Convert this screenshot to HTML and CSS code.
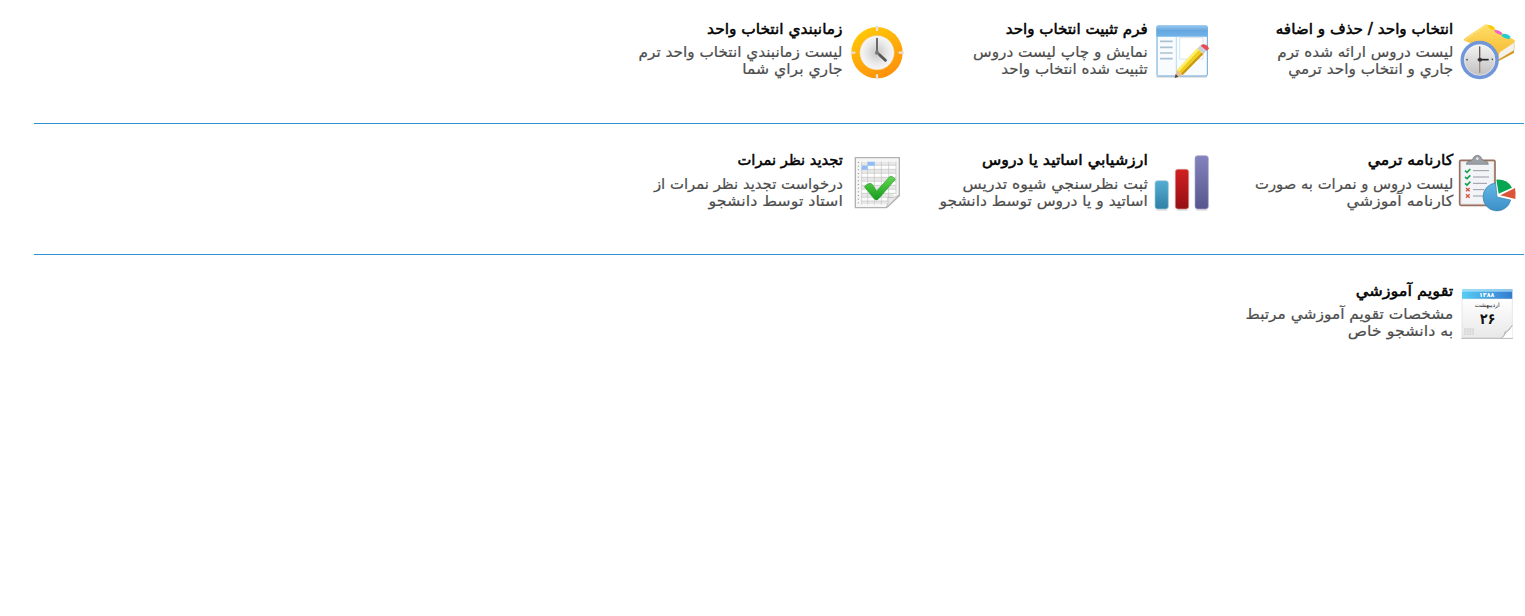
FILE: index.html
```html
<!DOCTYPE html>
<html lang="fa" dir="rtl">
<head>
<meta charset="utf-8">
<title>آموزش</title>
<link rel="stylesheet" href="styles.css">
</head>
<body>
<main class="menu">
  <section class="row">
    <a class="item">
      <svg class="icon" viewBox="21 21 180 180">
        <defs>
          <linearGradient id="folder" x1="0" y1="0" x2="0" y2="1"><stop offset="0" stop-color="#ffdf68"/><stop offset="1" stop-color="#f5b52b"/></linearGradient>
          <linearGradient id="dial" x1="0" y1="0" x2="0" y2="1"><stop offset="0" stop-color="#f8f8f8"/><stop offset="1" stop-color="#bcbcbc"/></linearGradient>
        </defs>
        <path d="M145 112l45-33q6 14 2 28l-45 27z" fill="#f3f1ec" stroke="#d2c3a4" stroke-width="2"/>
        <path d="M142 136l50-30v8l-50 26z" fill="#d99a25"/>
        <path d="M40 76q4-7 10-10l54-37q5-3 9 0l79 45q6 5-1 10l-42 28-7 24-30-30z" fill="url(#folder)"/>
        <path d="M113 31q10-4 22 8l-4 7-11-5z" fill="#f8cc08"/><path d="M132 46q12-3 25 8l-5 6-15-7z" fill="#ef62c8"/><path d="M154 59q15-7 28 6l-5 8q-12-1-21-9z" fill="#25cbcf"/>
        <path d="M42 78l66-48" stroke="#ffeaa0" stroke-width="2" fill="none"/>
        <circle cx="89" cy="135" r="54" fill="url(#dial)"/>
        <circle cx="89" cy="135" r="52" fill="none" stroke="#7196da" stroke-width="11"/>
        <circle cx="89" cy="135" r="46" fill="none" stroke="#fff" stroke-opacity=".7" stroke-width="2"/>
        <path d="M89 95v78" stroke="#a3887c" stroke-width="4"/><path d="M89 94v40" stroke="#555" stroke-width="3"/><path d="M83 134h33" stroke="#222" stroke-width="5"/>
        <circle cx="90" cy="134" r="6" fill="#333"/><circle cx="51" cy="134" r="2.5" fill="#444"/><circle cx="127" cy="133" r="2.5" fill="#444"/>
      </svg>
      <div class="text"><h2 style="--fit:1.013">انتخاب واحد / حذف و اضافه</h2><p style="--fit:1.014">ليست دروس ارائه شده ترم</p><p style="--fit:1.02">جاري و انتخاب واحد ترمي</p></div>
    </a>
    <a class="item">
      <svg class="icon" viewBox="21 21 180 180">
        <defs><linearGradient id="bar" x1="0" y1="0" x2="0" y2="1"><stop offset="0" stop-color="#9ac8ef"/><stop offset=".45" stop-color="#65a6df"/><stop offset="1" stop-color="#72b4e9"/></linearGradient></defs>
        <path d="M33 186h153" stroke="#ddd" stroke-width="4"/>
        <rect x="36" y="33" width="151" height="150" rx="4" fill="#f9fcfe" stroke="#68a4d5" stroke-width="3"/>
        <path d="M34 65V37q0-6 6-6h142q6 0 6 6v28z" fill="url(#bar)"/>
        <path d="M94 66v115" stroke="#9bc7e9" stroke-width="2"/>
        <path d="M104 68h70v64h-70z" fill="#fff" stroke="#cbd7e2" stroke-width="2"/>
        <path d="M45 79h38M45 97h38M45 114h38M45 131h38" stroke="#a9c2d1" stroke-width="5"/>
        <path d="M96 165l61-65 18 17-62 63z" fill="#f0cd20"/><path d="M96 165l61-65 5 5-61 65z" fill="#fff06b"/><path d="M108 176l62-63 5 4-62 63z" fill="#c79612"/>
        <path d="M96 165l-7 24 24-9z" fill="#e9bd91"/><path d="M92 177l-3 12 11-4z" fill="#444"/>
        <path d="M157 100l10-9 18 15-10 11z" fill="#cbd0d8"/><path d="M167 92q6-7 15-3 9 3 10 12l-7 6z" fill="#e34d55"/>
      </svg>
      <div class="text"><h2 style="--fit:1.004">فرم تثبيت انتخاب واحد</h2><p style="--fit:1.017">نمايش و چاپ ليست دروس</p><p style="--fit:1.01">تثبيت شده انتخاب واحد</p></div>
    </a>
    <a class="item">
      <svg class="icon" viewBox="15 21 180 180">
        <defs><linearGradient id="ring" x1="0" y1="0" x2=".5" y2="1"><stop offset="0" stop-color="#ffd006"/><stop offset="1" stop-color="#ff930b"/></linearGradient>
        <radialGradient id="face"><stop offset="0" stop-color="#c6c6c6"/><stop offset=".6" stop-color="#e8e8e8"/><stop offset="1" stop-color="#f8f8f8"/></radialGradient></defs>
        <circle cx="105" cy="113" r="77" fill="url(#ring)"/><circle cx="105" cy="113" r="52" fill="url(#face)" stroke="#f4b53d" stroke-width="2"/>
        <path d="M105 33v15M105 178v15M26 113h14M170 113h16" stroke="#e5e1dc" stroke-width="7"/>
        <path d="M105 71v41l26 24" stroke="#6a6a6a" stroke-width="6" fill="none" stroke-linecap="round"/><path d="M113 120l17 16" stroke="#555" stroke-width="8" stroke-linecap="round"/><circle cx="105" cy="113" r="6" fill="#777"/>
      </svg>
      <div class="text"><h2 style="--fit:1.026">زمانبندي انتخاب واحد</h2><p style="--fit:1.017">ليست زمانبندي انتخاب واحد ترم</p><p style="--fit:1.038">جاري براي شما</p></div>
    </a>
  </section>
  <section class="row">
    <a class="item">
      <svg class="icon" viewBox="21 24 180 180">
        <defs><linearGradient id="pie" x1="0" y1="0" x2="0" y2="1"><stop offset="0" stop-color="#65b7e5"/><stop offset="1" stop-color="#3a8fc7"/></linearGradient></defs>
        <rect x="29" y="46" width="106" height="135" rx="4" fill="#e9e9ec" stroke="#97715e" stroke-width="5"/>
        <rect x="35" y="52" width="94" height="123" fill="#f3f4f7"/>
        <path d="M49 58q0-9 11-10 7-1 9-8 4-9 13-9t13 9q2 7 10 8 10 1 10 10z" fill="#9a9fa5" stroke="#74797f" stroke-width="2"/><circle cx="82" cy="41" r="4" fill="#e8e8e8"/>
        <path d="M69 77h48M69 96h48M69 115h42M69 134h34M69 153h30" stroke="#969ba4" stroke-width="3"/>
        <path d="M45 77l6 5 10-10M45 96l6 5 10-10M45 115l6 5 10-10" stroke="#14a34c" stroke-width="5" fill="none"/>
        <path d="M48 129l11 10m0-10l-11 10M48 148l11 10m0-10l-11 10" stroke="#d8523c" stroke-width="4"/>
        <path d="M141 156l-4-42a42 42 0 1 0 45 51z" fill="url(#pie)" stroke="#377fad" stroke-width="2"/>
        <path d="M146 146l-7-42q33-2 47 24z" fill="#08a552"/><path d="M151 151l44-22q3 16 1 33z" fill="#dc5438"/>
      </svg>
      <div class="text"><h2 style="--fit:1.05">كارنامه ترمي</h2><p style="--fit:.985">ليست دروس و نمرات به صورت</p><p style="--fit:1.06">كارنامه آموزشي</p></div>
    </a>
    <a class="item">
      <svg class="icon" viewBox="21 24 180 180">
        <defs><linearGradient id="blue" x1="0" y1="0" x2="0" y2="1"><stop offset="0" stop-color="#55add3"/><stop offset="1" stop-color="#2e80a5"/></linearGradient><linearGradient id="red" x1="0" y1="0" x2="0" y2="1"><stop offset="0" stop-color="#d12020"/><stop offset="1" stop-color="#950f14"/></linearGradient><linearGradient id="violet" x1="0" y1="0" x2="0" y2="1"><stop offset="0" stop-color="#8583bd"/><stop offset="1" stop-color="#57558e"/></linearGradient></defs>
        <path d="M34 195h33M95 195h33M154 195h33" stroke="#ddd" stroke-width="5"/>
        <rect x="30" y="107" width="40" height="85" rx="8" fill="url(#blue)" stroke="#9fc9dc" stroke-width="2"/><rect x="91" y="73" width="40" height="119" rx="8" fill="url(#red)" stroke="#d49191" stroke-width="2"/><rect x="150" y="32" width="40" height="160" rx="8" fill="url(#violet)" stroke="#a7a6cb" stroke-width="2"/>
      </svg>
      <div class="text"><h2 style="--fit:1.053">ارزشيابي اساتيد يا دروس</h2><p style="--fit:1.046">ثبت نظرسنجي شيوه تدريس</p><p style="--fit:1.032">اساتيد و يا دروس توسط دانشجو</p></div>
    </a>
    <a class="item">
      <svg class="icon" viewBox="15 24 180 180">
        <defs><linearGradient id="check" x1="0" y1="0" x2="0" y2="1"><stop offset="0" stop-color="#63d94d"/><stop offset="1" stop-color="#159b1d"/></linearGradient></defs>
        <path d="M40 38h132v114l-38 36H40z" fill="#f6f6f6" stroke="#b2b2b2" stroke-width="4"/>
        <path d="M58 50h104v100l-30 30H58z" fill="#fff"/>
        <path d="M58 50h104v11H58zM58 73h104v11H58zM58 97h104v11H58zM58 121h104v11H58zM58 145h98v11H58zM58 168h78v10H58z" fill="#e8e8e8"/>
        <path d="M59 50v129M77 50v129M97 50v129M118 50v129M140 50v115M162 50v98M58 61h104M58 73h104M58 85h104M58 97h104M58 109h104M58 121h104M58 133h104M58 145h104M58 157h90M58 168h80" stroke="#bdbdbd" stroke-width="1.8"/>
        <path d="M59 62h18V50h21v12H77v12H59z" fill="#8fbdf7"/><path d="M49 51v132" stroke="#888" stroke-width="3" stroke-dasharray="3 8"/>
        <path d="M133 187q9-14 4-30 16 5 34-6z" fill="#e9e9e9" stroke="#aaa" stroke-width="2"/>
        <path d="M67 125q7-8 17-10 5 0 8 5l12 18 39-43q4-3 8 0l9 8-50 58q-6 7-13 1z" fill="url(#check)" stroke="#2f9634" stroke-width="2"/>
      </svg>
      <div class="text"><h2 style="--fit:.98">تجديد نظر نمرات</h2><p style="--fit:.99">درخواست تجديد نظر نمرات از</p><p style="--fit:1.06">استاد توسط دانشجو</p></div>
    </a>
  </section>
  <section class="row">
    <a class="item">
      <svg class="icon" viewBox="21 18 180 180">
        <defs><linearGradient id="head"><stop offset="0" stop-color="#56cdf2"/><stop offset="1" stop-color="#347bd0"/></linearGradient><linearGradient id="sheet" x1="0" y1="0" x2="0" y2="1"><stop offset="0" stop-color="#fff"/><stop offset="1" stop-color="#e8e8e8"/></linearGradient></defs>
        <path d="M36 62h151v118H36z" fill="url(#sheet)" stroke="#ddd" stroke-width="2"/><path d="M34 181h155" stroke="#b7b7b7" stroke-width="3"/>
        <path d="M36 33h151v29H36z" fill="url(#head)"/><path d="M36 33h151v8H36z" fill="#b8e5fa" opacity=".7"/>
        <text class="year" x="110" y="58">۱۳۸۸</text><text class="month" x="112" y="88">ارديبهشت</text><text class="day" transform="translate(113 137) scale(.85 1)">۲۶</text>
        <path d="M42 151h30v20H42z" fill="#d5d5d5"/><path d="M42 156h30M42 162h30M42 167h30M49 151v20M57 151v20M65 151v20" stroke="#eee" stroke-width="1.5"/>
        <path d="M156 179q8-5 8-17 15-2 23-20v37z" fill="#fff"/><path d="M156 179q9-5 8-17 14-2 23-20z" fill="#d5d5d5" stroke="#aaa" stroke-width="2"/>
      </svg>
      <div class="text"><h2 style="--fit:1.075">تقويم آموزشي</h2><p style="--fit:1.027">مشخصات تقويم آموزشي مرتبط</p><p style="--fit:1.06">به دانشجو خاص</p></div>
    </a>
  </section>
</main>
</body>
</html>
```
FILE: styles.css
```css
body { margin: 0; background: #fff; font-family: "DejaVu Sans", sans-serif; }
.menu { padding: 0 1px 0 34px; }
.row { box-sizing: border-box; display: flex; height: 131px; padding: 29px 7px 0 0; border-bottom: 1px solid #2e93d5; }
.row:first-child { height: 124px; padding-top: 22px; }
.row:last-child { border-bottom: 0; }
.item { display: flex; width: 305px; gap: 4px; }
.icon { flex: none; width: 60px; height: 60px; overflow: visible; }
.text { white-space: nowrap; }
h2, p { transform: scaleX(var(--fit)); transform-origin: right; }
h2 { margin: -2px 0 6px; font-size: 15px; line-height: 18px; font-weight: normal; color: #000; -webkit-text-stroke: .5px #000; }
.row:nth-child(2) h2 { margin-bottom: 7px; }
p { margin: 0; font-size: 15px; line-height: 17px; color: #4d4d4d; -webkit-text-stroke: .2px #4d4d4d; }
.year, .month, .day { text-anchor: middle; font-weight: bold; }
.year { font-size: 19px; fill: #fff; }
.month { font-size: 18px; font-weight: normal; fill: #222; }
.day { font-size: 44px; fill: #111; }
```
